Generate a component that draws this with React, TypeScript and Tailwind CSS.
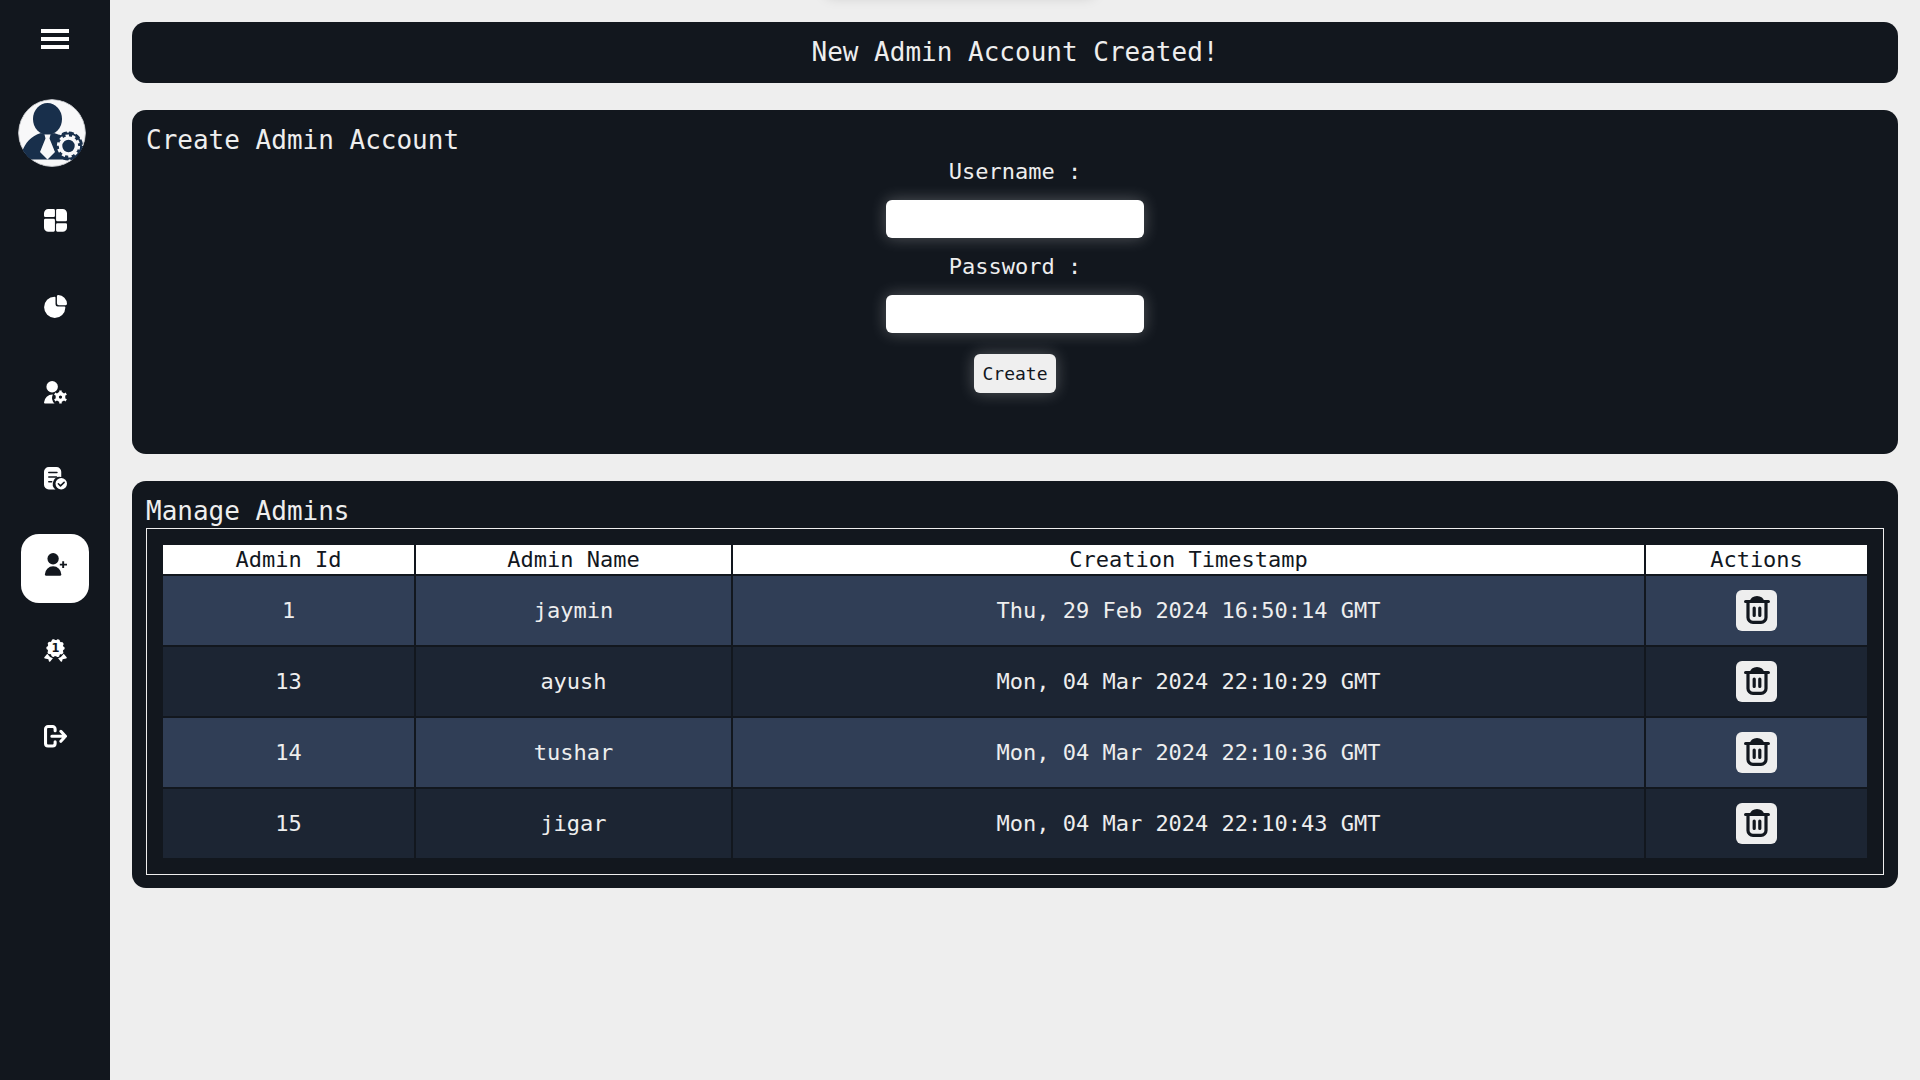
import React from "react";

type IconProps = { className?: string };

const svgProps = { viewBox: "0 0 24 24", fill: "currentColor", "aria-hidden": true } as const;

function DashboardIcon({ className }: IconProps) {
  return (
    <svg {...svgProps} className={className}>
      <path d="M4.5 0H10a1.4 1.4 0 0 1 1.4 1.4V7A1.4 1.4 0 0 1 10 8.4H1.4A1.4 1.4 0 0 1 0 7V4.5A4.5 4.5 0 0 1 4.5 0Z" />
      <path d="M1.4 10.3H10a1.4 1.4 0 0 1 1.4 1.4v10.6A1.4 1.4 0 0 1 10 23.7H4.5A4.5 4.5 0 0 1 0 19.2v-7.5a1.4 1.4 0 0 1 1.4-1.4Z" />
      <path d="M14 0h5.5A4.5 4.5 0 0 1 24 4.5v7a1.4 1.4 0 0 1-1.4 1.4H14a1.4 1.4 0 0 1-1.4-1.4V1.4A1.4 1.4 0 0 1 14 0Z" />
      <path d="M14 14.9h8.6a1.4 1.4 0 0 1 1.4 1.4v2.9a4.5 4.5 0 0 1-4.5 4.5H14a1.4 1.4 0 0 1-1.4-1.4v-6A1.4 1.4 0 0 1 14 14.9Z" />
    </svg>
  );
}

function PieIcon({ className }: IconProps) {
  return (
    <svg {...svgProps} className={className}>
      <path d="M12 2.6v7a2.3 2.3 0 0 0 2.3 2.3h7a1 1 0 0 1 1 1.1A11.1 11.1 0 1 1 11 1.7a1 1 0 0 1 1 .9Z" />
      <path d="M14.9 0A9.5 9.5 0 0 1 24 9.2a1.4 1.4 0 0 1-1.4 1.4h-7a2.1 2.1 0 0 1-2.1-2.1V1.4A1.4 1.4 0 0 1 14.9 0Z" />
    </svg>
  );
}

function UserGearIcon({ className }: IconProps) {
  return (
    <svg {...svgProps} className={className}>
      <circle cx="8.5" cy="6" r="6" />
      <path d="M9.2 14a8.500 8.500 0 0 0 1.800 9.500H1a1 1 0 0 1-1-1A8.900 8.900 0 0 1 9.200 14Z" />
      <circle cx="17.200" cy="16.700" r="3.400" fill="none" stroke="currentColor" strokeWidth="3.400" />
      <path
        d="M17.200 9.800v3.200M17.200 20.400v3.200M11.200 13.200l2.800 1.700M20.400 18.500l2.800 1.700M11.200 20.200l2.800-1.700M20.400 14.900l2.800-1.700"
        stroke="currentColor"
        strokeWidth="2.600"
      />
    </svg>
  );
}

function ReportIcon({ className }: IconProps) {
  return (
    <svg {...svgProps} className={className}>
      <path d="M5 0h8a5 5 0 0 1 5 5v5.500a7.300 7.300 0 0 0-6 12.900H5a5 5 0 0 1-5-5V5a5 5 0 0 1 5-5Z" />
      <path d="M5 5.800h8.500M5 10.500h8M5 15.300h3" stroke="#12171e" strokeWidth="1.600" strokeLinecap="round" />
      <circle cx="18" cy="17.500" r="6" />
      <path d="m15 17.500 2.200 2.200 3.800-3.700" fill="none" stroke="#12171e" strokeWidth="1.600" strokeLinecap="round" strokeLinejoin="round" />
    </svg>
  );
}

function UserPlusIcon({ className }: IconProps) {
  return (
    <svg {...svgProps} className={className}>
      <circle cx="9.500" cy="6" r="5.900" />
      <path d="M.9 22.500a8.600 8.600 0 0 1 17.200 0c0 .7-.5 1.200-1.100 1.200H2c-.6 0-1.100-.5-1.100-1.200Z" />
      <path d="M20 8.600v7M16.500 12.100H24" stroke="currentColor" strokeWidth="2" />
    </svg>
  );
}

function AwardIcon({ className }: IconProps) {
  return (
    <svg {...svgProps} className={className}>
      <circle cx="12" cy="9.500" r="8.400" />
      <circle cx="12" cy="9.500" r="7.800" fill="none" stroke="currentColor" strokeWidth="3.600" strokeLinecap="round" strokeDasharray="0.100 4.800" />
      <path d="M3.400 15.400a11 11 0 0 0 5.900 4.700L6.500 23.400a.8.8 0 0 1-1.400-.3l-.5-2.100-3.700-.6a.8.8 0 0 1-.5-1.300ZM20.600 15.400a11 11 0 0 1-5.900 4.700l2.800 3.300a.8.8 0 0 0 1.400-.3l.5-2.100 3.700-.6a.8.8 0 0 0 .5-1.300Z" />
      <text x="12" y="14" textAnchor="middle" fontFamily="DejaVu Sans, sans-serif" fontWeight="700" fontSize="12" fill="#12171e">1</text>
    </svg>
  );
}

function ExitIcon({ className }: IconProps) {
  return (
    <svg {...svgProps} className={className}>
      <g fill="none" stroke="currentColor" strokeWidth="3.200" strokeLinecap="round" strokeLinejoin="round">
        <path d="M11.600 6V4.200a2.600 2.600 0 0 0-2.600-2.600H4.200a2.600 2.600 0 0 0-2.600 2.600v15.100a2.600 2.600 0 0 0 2.600 2.600H9a2.600 2.600 0 0 0 2.600-2.600v-1.800" />
        <path d="M8.200 11.800h14M17.600 6.600l4.800 5.200-4.800 5.200" />
      </g>
    </svg>
  );
}

function TrashIcon({ className }: IconProps) {
  return (
    <svg viewBox="0 0 26 28" aria-hidden className={className}>
      <path d="M6 5.500a7 5.500 0 0 1 14 0Z" fill="currentColor" />
      <g fill="none" stroke="currentColor" strokeWidth="3.200" strokeLinecap="round">
        <path d="M1.600 5.500h22.800M4 6v15.400a5 5 0 0 0 5 5h8a5 5 0 0 0 5-5V6M10.200 12v7.500M15.800 12v7.500" />
      </g>
    </svg>
  );
}

function Avatar() {
  return (
    <svg viewBox="0 0 68 68" role="img" aria-label="Administrator" className="size-[68px] rounded-full">
      <circle cx="34" cy="34" r="33.500" fill="#f8f8f9" stroke="#b9bcc0" />
      <g fill="#182f4b">
        <ellipse cx="29.500" cy="20" rx="14.500" ry="16" />
        <path d="M4 53c3-9 9-16 19-19 4 2 9 2 13 0 6 2 11 4 15 8v18.500H12c-3-2-6-4-8-7.500Z" />
      </g>
      <path d="M26.500 35.500h6l-1 4L37 53l-7.500 7.500L22 53l5.500-13.500Z" fill="#f8f8f9" />
      <g fill="none" stroke="#182f4b">
        <circle cx="50.500" cy="47" r="11.500" strokeWidth="4" fill="#182f4b" />
        <circle cx="50.500" cy="47" r="13" strokeWidth="3" strokeDasharray="4.810 2" />
      </g>
      <g fill="#182f4b" stroke="#f8f8f9">
        <circle cx="50.500" cy="47" r="8" strokeWidth="3.600" />
        <circle cx="50.500" cy="47" r="10.300" strokeWidth="2.600" strokeDasharray="3.400 3.072" fill="none" />
      </g>
    </svg>
  );
}

const navItems = [
  { label: "Dashboard", Icon: DashboardIcon },
  { label: "Analytics", Icon: PieIcon },
  { label: "Manage users", Icon: UserGearIcon },
  { label: "Reports", Icon: ReportIcon },
  { label: "Admins", Icon: UserPlusIcon, active: true },
  { label: "Awards", Icon: AwardIcon },
  { label: "Log out", Icon: ExitIcon },
];

const admins = [
  { id: 1, name: "jaymin", created: "Thu, 29 Feb 2024 16:50:14 GMT" },
  { id: 13, name: "ayush", created: "Mon, 04 Mar 2024 22:10:29 GMT" },
  { id: 14, name: "tushar", created: "Mon, 04 Mar 2024 22:10:36 GMT" },
  { id: 15, name: "jigar", created: "Mon, 04 Mar 2024 22:10:43 GMT" },
];

const glow = "shadow-[0_0_16px_rgba(255,255,255,0.28)]";

function Sidebar() {
  return (
    <aside className="flex w-[110px] shrink-0 flex-col items-center bg-[#12171e] pt-[29px] text-white">
      <button type="button" aria-label="Toggle menu" className="flex w-7 flex-col gap-1">
        <span className="h-1 w-full bg-white" />
        <span className="h-1 w-full bg-white" />
        <span className="h-1 w-full bg-white" />
      </button>
      <div className="mt-[50px] mr-[6px]">
        <Avatar />
      </div>
      <nav aria-label="Main" className="mt-[23px] flex flex-col gap-[17px]">
        {navItems.map(({ label, Icon, active }) => (
          <a
            key={label}
            href="#"
            aria-label={label}
            aria-current={active ? "page" : undefined}
            className={
              "flex h-[69px] w-[68px] justify-center rounded-[18px] pt-[19px] " +
              (active ? "bg-white text-[#12171e]" : "text-white")
            }
          >
            <Icon className="size-[23px]" />
          </a>
        ))}
      </nav>
    </aside>
  );
}

function Field({ id, label, type }: { id: string; label: string; type: string }) {
  return (
    <>
      <label htmlFor={id} className="text-[22px] leading-[29px]">
        {label}
      </label>
      <input
        id={id}
        type={type}
        className={"my-[14px] h-[38px] w-[258px] rounded-md bg-white px-2 text-lg text-[#12171e] " + glow}
      />
    </>
  );
}

export default function App() {
  return (
    <div className="relative flex min-h-screen overflow-hidden bg-[#eeeeee] font-['DejaVu_Sans_Mono',monospace] text-[#eeeeee]">
      <div className="absolute -top-9 left-1/2 ml-[-134px] h-8 w-[268px] rounded-md shadow-[0_0_14px_rgba(0,0,0,0.18)]" />
      <Sidebar />
      <main className="flex min-w-0 flex-1 flex-col gap-[27px] p-[22px]">
        <p role="status" className="rounded-[14px] bg-[#12171e] p-[14px] text-center text-[26px] leading-[33px]">
          New Admin Account Created!
        </p>

        <section className="rounded-[14px] bg-[#12171e] px-[14px] pt-[14px] pb-[61px]">
          <h1 className="text-[26px] leading-[33px]">Create Admin Account</h1>
          <form className="flex flex-col items-center" onSubmit={(e) => e.preventDefault()}>
            <Field id="username" label="Username :" type="text" />
            <Field id="password" label="Password :" type="password" />
            <button
              type="submit"
              className={"mt-[7px] h-[39px] rounded-md bg-[#efefef] px-2 text-lg text-[#12171e] " + glow}
            >
              Create
            </button>
          </form>
        </section>

        <section className="rounded-[14px] bg-[#12171e] px-[14px] pt-[14px] pb-[13px]">
          <h2 className="text-[26px] leading-[33px]">Manage Admins</h2>
          <div className="border border-[#eeeeee] p-[14px]">
            <table className="w-full table-fixed border-separate border-spacing-[2px] text-center text-[22px] leading-[29px]">
              <colgroup>
                <col className="w-[251px]" />
                <col className="w-[315px]" />
                <col />
                <col className="w-[221px]" />
              </colgroup>
              <thead className="bg-white text-[#12171e]">
                <tr>
                  <th className="p-0 font-normal">Admin Id</th>
                  <th className="p-0 font-normal">Admin Name</th>
                  <th className="p-0 font-normal">Creation Timestamp</th>
                  <th className="p-0 font-normal">Actions</th>
                </tr>
              </thead>
              <tbody>
                {admins.map((admin) => (
                  <tr key={admin.id} className="odd:bg-[#303e56] even:bg-[#1c2533]">
                    <td className="p-[14px]">{admin.id}</td>
                    <td>{admin.name}</td>
                    <td>{admin.created}</td>
                    <td>
                      <button
                        type="button"
                        aria-label={"Delete " + admin.name}
                        className="mx-auto my-[14px] flex size-[41px] items-center justify-center rounded-md bg-[#eeeeee] text-[#12171e]"
                      >
                        <TrashIcon className="mb-[2px] h-7 w-[26px]" />
                      </button>
                    </td>
                  </tr>
                ))}
              </tbody>
            </table>
          </div>
        </section>
      </main>
    </div>
  );
}
